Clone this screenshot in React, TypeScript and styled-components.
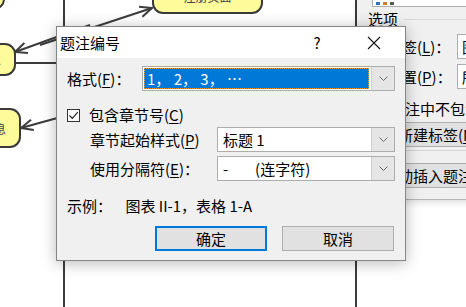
import styled, { createGlobalStyle } from "styled-components";

const GlobalStyle = createGlobalStyle`
  html, body {
    margin: 0;
    padding: 0;
    background: #ffffff;
  }
  body {
    font-family: "Noto Sans CJK SC", "Noto Sans", sans-serif;
    font-size: 15px;
    color: #000;
  }
`;

const Desktop = styled.div`
  position: relative;
  width: 466px;
  height: 307px;
  overflow: hidden;
  background: #ffffff;
`;

const Diagram = styled.svg`
  position: absolute;
  left: 0;
  top: 0;
`;

const Node = styled.div<{ $x: number; $y: number; $w: number; $h: number }>`
  position: absolute;
  left: ${(p) => p.$x}px;
  top: ${(p) => p.$y}px;
  width: ${(p) => p.$w}px;
  height: ${(p) => p.$h}px;
  box-sizing: border-box;
  background: #fdfb9a;
  border: 2px solid #3a3a3a;
  border-radius: 11px;
  display: flex;
  align-items: center;
  justify-content: flex-end;
  padding-right: 13px;
  font-size: 12px;
  color: #444;
  overflow: hidden;
`;

const TopNodeText = styled.span`
  position: absolute;
  left: 0;
  right: 0;
  bottom: 8px;
  text-align: center;
  line-height: 14px;
`;

/* word caption window behind the dialog */
const BackWindow = styled.div`
  position: absolute;
  left: 357px;
  top: 0;
  width: 130px;
  height: 200px;
  box-sizing: border-box;
  background: #f0f0f0;
  border-bottom: 1px solid #b5b5b5;
  box-shadow: 0 3px 6px rgba(0, 0, 0, 0.12);
  padding-left: 11px;
  display: flex;
  flex-direction: column;
  line-height: 20px;
`;

const ListBox = styled.div`
  margin-left: 4px;
  height: 6px;
  background: #fff;
  border: 1px solid #adadad;
  border-top: none;
  display: flex;
  align-items: flex-end;
  padding: 0 0 0 3px;
  gap: 3px;
`;

const ListIcon = styled.span<{ $c: string }>`
  width: 4px;
  height: 3px;
  background: ${(p) => p.$c};
  margin-bottom: 1px;
`;

const GroupHead = styled.div`
  display: flex;
  align-items: center;
  gap: 6px;
  margin-top: 1px;
  height: 22px;
  &::after {
    content: "";
    flex: 1;
    border-top: 1px solid #d8d8d8;
    margin-top: 1px;
  }
`;

const BackRow = styled.div<{ $top: number }>`
  display: flex;
  align-items: center;
  height: 25px;
  margin-top: ${(p) => p.$top}px;
`;

const BackLabel = styled.span`
  width: 70px;
  padding-left: 19px;
  flex-shrink: 0;
`;

const BackInput = styled.div`
  height: 25px;
  box-sizing: border-box;
  flex: 1;
  border: 1px solid #adadad;
  background: #fff;
  padding-left: 4px;
  white-space: nowrap;
  overflow: hidden;
  line-height: 23px;
`;

const BackText = styled.div<{ $pad: number; $top: number }>`
  padding-left: ${(p) => p.$pad}px;
  margin-top: ${(p) => p.$top}px;
  white-space: nowrap;
`;

const BackButton = styled.div<{ $pad: number; $top: number }>`
  margin-top: ${(p) => p.$top}px;
  margin-left: -5px;
  height: 25px;
  box-sizing: border-box;
  background: #e1e1e1;
  border: 1px solid #adadad;
  padding-left: ${(p) => p.$pad}px;
  white-space: nowrap;
  overflow: hidden;
  line-height: 23px;
`;

const Separator = styled.div`
  margin: 3px 0 0 -11px;
  border-top: 1px solid #d4d4d4;
  height: 0;
`;

/* caption numbering dialog */
const Dialog = styled.div`
  position: absolute;
  left: 56px;
  top: 26px;
  width: 350px;
  height: 235px;
  box-sizing: border-box;
  border: 1px solid #858585;
  background: #f0f0f0;
  box-shadow: 0 2px 14px rgba(0, 0, 0, 0.28);
  display: flex;
  flex-direction: column;
`;

const TitleBar = styled.div`
  height: 31px;
  background: #fff;
  display: flex;
  align-items: center;
  padding-left: 3px;
  flex-shrink: 0;
`;

const Title = styled.span`
  font-size: 15px;
  flex: 1;
`;

const CaptionButton = styled.div<{ $w: number }>`
  width: ${(p) => p.$w}px;
  height: 31px;
  display: flex;
  align-items: center;
  justify-content: center;
  font-size: 15px;
`;

const Body = styled.div`
  display: flex;
  flex-direction: column;
  padding: 8px 10px 0 10px;
  line-height: 20px;
`;

const Row = styled.div<{ $top?: number; $indent?: number }>`
  display: flex;
  align-items: center;
  margin-top: ${(p) => p.$top || 0}px;
  padding-left: ${(p) => p.$indent || 0}px;
  min-height: 20px;
  white-space: pre;
`;

const Label = styled.span<{ $w: number }>`
  width: ${(p) => p.$w}px;
  flex-shrink: 0;
  white-space: nowrap;
`;

const Select = styled.div<{ $w: number }>`
  width: ${(p) => p.$w}px;
  height: 25px;
  box-sizing: border-box;
  border: 1px solid #adadad;
  background: #fff;
  display: flex;
`;

const SelectValue = styled.div<{ $active?: boolean }>`
  flex: 1;
  margin: ${(p) => (p.$active ? "1px 2px 1px 1px" : "0")};
  padding-left: ${(p) => (p.$active ? "3px" : "5px")};
  background: ${(p) => (p.$active ? "#0078d7" : "transparent")};
  color: ${(p) => (p.$active ? "#fff" : "#000")};
  outline: ${(p) => (p.$active ? "1px dotted #f6a23c" : "none")};
  outline-offset: -1px;
  line-height: ${(p) => (p.$active ? "21px" : "23px")};
  white-space: pre;
  overflow: hidden;
`;

const SelectArrow = styled.div`
  width: 22px;
  background: #e5e5e5;
  border-left: 1px solid #cfcfcf;
  display: flex;
  align-items: center;
  justify-content: center;
  flex-shrink: 0;
`;

const CheckBox = styled.div`
  width: 13px;
  height: 13px;
  box-sizing: border-box;
  border: 1px solid #333;
  background: #fff;
  margin-right: 9px;
  display: flex;
  align-items: center;
  justify-content: center;
`;

const ButtonRow = styled.div`
  display: flex;
  justify-content: flex-end;
  gap: 15px;
  margin-top: 10px;
  padding-right: 1px;
`;

const Button = styled.div<{ $default?: boolean }>`
  width: 112px;
  height: 25px;
  box-sizing: border-box;
  background: #e1e1e1;
  border: ${(p) => (p.$default ? "2px solid #0078d7" : "1px solid #adadad")};
  display: flex;
  align-items: center;
  justify-content: center;
`;

const Chevron = () => (
  <svg width="9" height="5" viewBox="0 0 9 5">
    <path d="M0.5 0.5 L4.5 4.5 L8.5 0.5" fill="none" stroke="#6a6a6a" strokeWidth="1" />
  </svg>
);

const Arrow = ({ x1, y1, x2, y2 }: { x1: number; y1: number; x2: number; y2: number }) => {
  const a = Math.atan2(y1 - y2, x1 - x2);
  const len = 13;
  const spread = 0.42;
  const p1 = [x2 + len * Math.cos(a + spread), y2 + len * Math.sin(a + spread)];
  const p2 = [x2 + len * Math.cos(a - spread), y2 + len * Math.sin(a - spread)];
  return (
    <g stroke="#3c3c3c" strokeWidth="2" fill="none">
      <line x1={x1} y1={y1} x2={x2} y2={y2} />
      <polyline points={`${p1[0]},${p1[1]} ${x2},${y2} ${p2[0]},${p2[1]}`} />
    </g>
  );
};

const U = styled.span`
  text-decoration: underline;
  text-underline-offset: 2px;
`;

export default function App() {
  return (
    <>
      <GlobalStyle />
      <Desktop>
        <Diagram width="466" height="307">
          <g stroke="#3c3c3c" strokeWidth="2" fill="none">
            <line x1="64" y1="0" x2="64" y2="307" />
            <line x1="356" y1="0" x2="356" y2="307" />
            <line x1="15" y1="63" x2="64" y2="63" />
          </g>
          <Arrow x1={40} y1={45} x2={152} y2={8} />
          <Arrow x1={90} y1={25} x2={15} y2={52} />
          <Arrow x1={90} y1={109} x2={21} y2={128} />
        </Diagram>

        <Node $x={-40} $y={-20} $w={45} $h={30} />
        <Node $x={152} $y={-25} $w={111} $h={39}>
          <TopNodeText>注册页面</TopNodeText>
        </Node>
        <Node $x={-40} $y={43} $w={56} $h={33}>
          <span>信息</span>
        </Node>
        <Node $x={-40} $y={108} $w={61} $h={40}>
          <span>信息</span>
        </Node>

        <BackWindow>
          <ListBox>
            <ListIcon $c="#3d6fb8" />
            <ListIcon $c="#d47a2a" />
            <ListIcon $c="#5a5a5a" />
          </ListBox>
          <GroupHead>选项</GroupHead>
          <BackRow $top={4}>
            <BackLabel>标签(<U>L</U>)：</BackLabel>
            <BackInput>图表</BackInput>
          </BackRow>
          <BackRow $top={5}>
            <BackLabel>位置(<U>P</U>)：</BackLabel>
            <BackInput>所选项目下方</BackInput>
          </BackRow>
          <BackText $pad={7} $top={10}>从题注中不包含标签(<U>E</U>)</BackText>
          <BackButton $pad={34} $top={3}>新建标签(<U>N</U>)...</BackButton>
          <Separator />
          <BackButton $pad={19} $top={12}>自动插入题注(<U>A</U>)...</BackButton>
        </BackWindow>

        <Dialog>
          <TitleBar>
            <Title>题注编号</Title>
            <CaptionButton $w={46}>?</CaptionButton>
            <CaptionButton $w={11} />
            <CaptionButton $w={46}>
              <svg width="14" height="14" viewBox="0 0 14 14">
                <path d="M1 1 L13 13 M13 1 L1 13" stroke="#111" strokeWidth="1.1" />
              </svg>
            </CaptionButton>
            <CaptionButton $w={8} />
          </TitleBar>

          <Body>
            <Row>
              <Label $w={75}>格式(<U>F</U>)：</Label>
              <Select $w={254}>
                <SelectValue $active>{"1， 2， 3， …"}</SelectValue>
                <SelectArrow>
                  <Chevron />
                </SelectArrow>
              </Select>
            </Row>

            <Row $top={14}>
              <CheckBox>
                <svg width="11" height="11" viewBox="0 0 11 11">
                  <path d="M1.5 5.5 L4.3 8.3 L9.8 2.2" fill="none" stroke="#222" strokeWidth="1.2" />
                </svg>
              </CheckBox>
              <span>包含章节号(<U>C</U>)</span>
            </Row>

            <Row $top={2} $indent={23}>
              <Label $w={127}>章节起始样式(<U>P</U>)</Label>
              <Select $w={179}>
                <SelectValue>标题 1</SelectValue>
                <SelectArrow>
                  <Chevron />
                </SelectArrow>
              </Select>
            </Row>

            <Row $top={4} $indent={23}>
              <Label $w={127}>使用分隔符(<U>E</U>)：</Label>
              <Select $w={179}>
                <SelectValue>{"-        (连字符)"}</SelectValue>
                <SelectArrow>
                  <Chevron />
                </SelectArrow>
              </Select>
            </Row>

            <Row $top={15}>{"示例：    图表 II-1，表格 1-A"}</Row>

            <ButtonRow>
              <Button $default>确定</Button>
              <Button>取消</Button>
            </ButtonRow>
          </Body>
        </Dialog>
      </Desktop>
    </>
  );
}
